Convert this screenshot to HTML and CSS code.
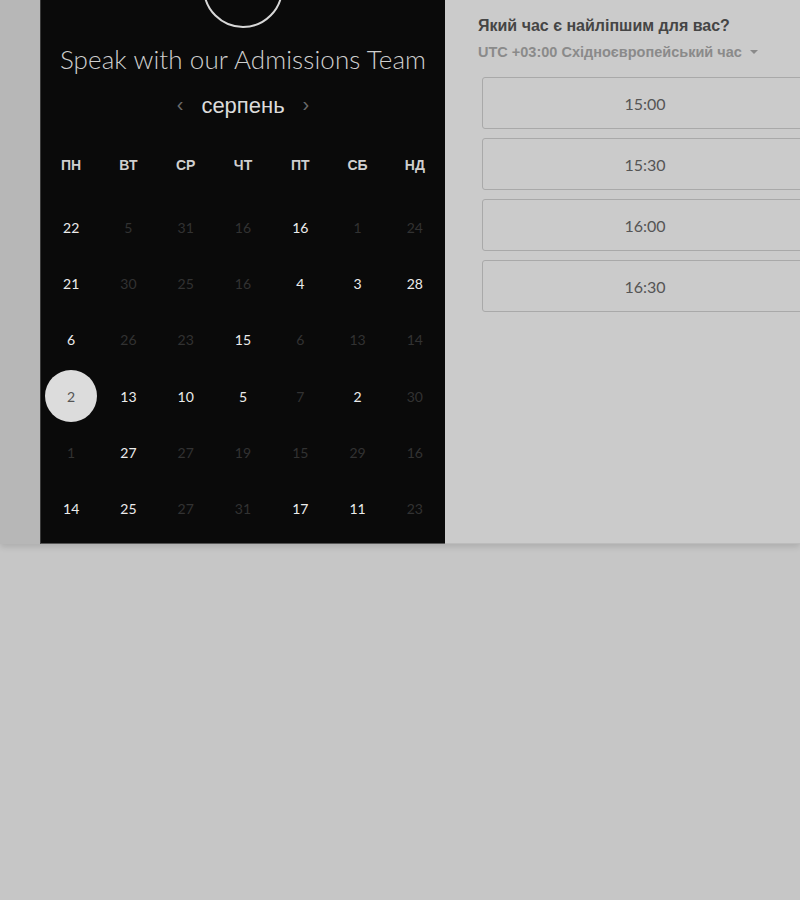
FILE: index.html
```html
<!DOCTYPE html>
<html lang="uk">
<head>
<meta charset="utf-8">
<title>Admissions</title>
<link rel="stylesheet" href="styles.css">
</head>
<body>
<div class="top">
  <div class="gutter"></div>
  <section class="cal">
    <div class="avatar"></div>
    <h1 class="title">Speak with our Admissions Team</h1>
    <div class="month">
      <span class="arrow">‹</span>
      <span class="mname">серпень</span>
      <span class="arrow">›</span>
    </div>
    <div class="weekdays">
      <div class="wd">ПН</div><div class="wd">ВТ</div><div class="wd">СР</div><div class="wd">ЧТ</div><div class="wd">ПТ</div><div class="wd">СБ</div><div class="wd">НД</div>
    </div>
    <div class="days">
      <div class="d on">22</div><div class="d">5</div><div class="d">31</div><div class="d">16</div><div class="d on">16</div><div class="d">1</div><div class="d">24</div>
      <div class="d on">21</div><div class="d">30</div><div class="d">25</div><div class="d">16</div><div class="d on">4</div><div class="d on">3</div><div class="d on">28</div>
      <div class="d on">6</div><div class="d">26</div><div class="d">23</div><div class="d on">15</div><div class="d">6</div><div class="d">13</div><div class="d">14</div>
      <div class="d sel"><span>2</span></div><div class="d on">13</div><div class="d on">10</div><div class="d on">5</div><div class="d">7</div><div class="d on">2</div><div class="d">30</div>
      <div class="d">1</div><div class="d on">27</div><div class="d">27</div><div class="d">19</div><div class="d">15</div><div class="d">29</div><div class="d">16</div>
      <div class="d on">14</div><div class="d on">25</div><div class="d">27</div><div class="d">31</div><div class="d on">17</div><div class="d on">11</div><div class="d">23</div>
    </div>
  </section>
  <section class="times">
    <h2 class="q">Який час є найліпшим для вас?</h2>
    <div class="tz">UTC +03:00 Східноєвропейський час <span class="caret"></span></div>
    <div class="slots">
      <button class="slot">15:00</button>
      <button class="slot">15:30</button>
      <button class="slot">16:00</button>
      <button class="slot">16:30</button>
    </div>
  </section>
</div>
</body>
</html>
```
FILE: styles.css
```css
html, body {
  margin: 0;
  padding: 0;
  background: #c6c6c6;
  overflow: hidden;
}
body {
  width: 800px;
  height: 900px;
  font-family: "Liberation Sans", Arial, sans-serif;
}
.top {
  display: flex;
  height: 544px;
  box-shadow: 0 3px 6px rgba(0,0,0,0.12);
}
.gutter {
  width: 40px;
  background: #b7b7b7;
  flex: none;
}
.cal {
  width: 405px;
  flex: none;
  background: #0a0a0a;
  border-left: 1px solid #3a3a3a;
  border-bottom: 1px solid #555;
  box-sizing: border-box;
  overflow: hidden;
  display: flex;
  flex-direction: column;
  align-items: center;
}
.avatar {
  width: 76px;
  height: 76px;
  border: 2px solid #d8d8d8;
  border-radius: 50%;
  margin-top: -52px;
  flex: none;
}
.title {
  margin: 15px 0 0;
  font-family: Lato, "Open Sans", sans-serif;
  font-weight: 300;
  font-size: 26px;
  line-height: 32px;
  color: #cfcfcf;
  letter-spacing: 0.1px;
  white-space: nowrap;
}
.month {
  display: flex;
  align-items: center;
  gap: 18px;
  margin-top: 17px;
  height: 28px;
}
.arrow {
  color: #6a6a6a;
  font-size: 20px;
  line-height: 20px;
  margin-top: -4px;
}
.mname {
  color: #dcdcdc;
  font-size: 22px;
  line-height: 28px;
}
.weekdays,
.days {
  width: 401px;
  display: grid;
  grid-template-columns: repeat(7, 1fr);
}
.weekdays {
  margin-top: 32px;
}
.days {
  margin-top: 21px;
  grid-auto-rows: 56.3px;
}
.wd {
  text-align: center;
  color: #cfcfcf;
  font-weight: bold;
  font-size: 14px;
  line-height: 26px;
}
.d {
  display: flex;
  align-items: center;
  justify-content: center;
  font-family: Lato, "Open Sans", sans-serif;
  font-size: 14px;
  color: #323232;
}
.d.on {
  color: #ececec;
}
.d.sel span {
  width: 52px;
  height: 52px;
  border-radius: 50%;
  background: #dcdcdc;
  color: #555;
  display: flex;
  align-items: center;
  justify-content: center;
}
.times {
  flex: 1;
  background: #cbcbcb;
  border-bottom: 1px solid #bcbcbc;
  box-sizing: border-box;
  padding: 15px 0 0 33px;
  overflow: hidden;
}
.q {
  margin: 0;
  font-size: 16px;
  line-height: 22px;
  font-weight: bold;
  color: #454545;
}
.tz {
  margin-top: 6px;
  font-size: 14.5px;
  line-height: 18px;
  font-weight: bold;
  color: #8a8a8a;
  display: flex;
  align-items: center;
  gap: 6px;
}
.caret {
  width: 0;
  height: 0;
  border-left: 4px solid transparent;
  border-right: 4px solid transparent;
  border-top: 4px solid #8a8a8a;
  margin-left: 2px;
}
.slots {
  margin-top: 16px;
  margin-left: 4px;
  display: flex;
  flex-direction: column;
  gap: 9px;
  width: 326px;
}
.slot {
  height: 52px;
  background: transparent;
  border: 1px solid #a9a9a9;
  border-radius: 3px;
  font-family: Lato, "Open Sans", sans-serif;
  font-size: 16px;
  color: #555;
  padding: 0;
}
```
